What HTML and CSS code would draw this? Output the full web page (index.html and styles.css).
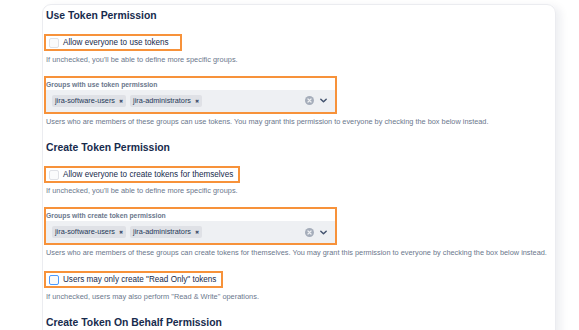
FILE: index.html
```html
<!DOCTYPE html>
<html lang="en">
<head>
    <meta charset="UTF-8">
    <meta name="viewport" content="width=device-width, initial-scale=1.0">
    <title>Token Permissions</title>
    <link rel="stylesheet" href="styles.css">
</head>
<body>
    <main class="card">
        <h2 class="title first">Use Token Permission</h2>
        <div class="mark check-mark wide">
            <label class="check"><span class="box"></span>Allow everyone to use tokens</label>
        </div>
        <p class="hint">If unchecked, you'll be able to define more specific groups.</p>

        <div class="mark field-mark">
            <div class="label">Groups with use token permission</div>
            <div class="select">
                <span class="tag">jira-software-users <i>&#x2716;</i></span>
                <span class="tag">jira-administrators <i>&#x2716;</i></span>
                <span class="icons">
                    <svg width="9" height="9" viewBox="0 0 10 10"><circle cx="5" cy="5" r="5" fill="#a5adba"/><path d="M3.3 3.3l3.4 3.4M6.7 3.3L3.3 6.7" stroke="#eef0f3" stroke-width="1.4" stroke-linecap="round"/></svg>
                    <svg width="9" height="9" viewBox="0 0 10 10"><path d="M2 3.5l3 3 3-3" fill="none" stroke="#42526e" stroke-width="1.6" stroke-linecap="round" stroke-linejoin="round"/></svg>
                </span>
            </div>
        </div>
        <p class="desc">Users who are members of these groups can use tokens. You may grant this permission to everyone by checking the box below instead.</p>

        <h2 class="title">Create Token Permission</h2>
        <div class="mark check-mark">
            <label class="check"><span class="box"></span>Allow everyone to create tokens for themselves</label>
        </div>
        <p class="hint">If unchecked, you'll be able to define more specific groups.</p>

        <div class="mark field-mark">
            <div class="label">Groups with create token permission</div>
            <div class="select">
                <span class="tag">jira-software-users <i>&#x2716;</i></span>
                <span class="tag">jira-administrators <i>&#x2716;</i></span>
                <span class="icons">
                    <svg width="9" height="9" viewBox="0 0 10 10"><circle cx="5" cy="5" r="5" fill="#a5adba"/><path d="M3.3 3.3l3.4 3.4M6.7 3.3L3.3 6.7" stroke="#eef0f3" stroke-width="1.4" stroke-linecap="round"/></svg>
                    <svg width="9" height="9" viewBox="0 0 10 10"><path d="M2 3.5l3 3 3-3" fill="none" stroke="#42526e" stroke-width="1.6" stroke-linecap="round" stroke-linejoin="round"/></svg>
                </span>
            </div>
        </div>
        <p class="desc">Users who are members of these groups can create tokens for themselves. You may grant this permission to everyone by checking the box below instead.</p>

        <div class="mark check-mark after-desc">
            <label class="check"><span class="box box-focus"></span>Users may only create "Read Only" tokens</label>
        </div>
        <p class="hint">If unchecked, users may also perform "Read &amp; Write" operations.</p>

        <h2 class="title">Create Token On Behalf Permission</h2>
    </main>
</body>
</html>
```

FILE: styles.css
```css
body,html{
    margin: 0;
    padding: 0;
    background: #fff;
    height: 100%;
    overflow: hidden;
}

body{
    font-family: "Liberation Sans", Arial, sans-serif;
    color: #172b4d;
}

.card{
    margin: 4px 0 0 42px;
    width: 511px;
    min-height: 400px;
    padding: 0 0 0 1px;
    border: 1px solid #ebecf0;
    border-radius: 9px;
    box-shadow: 5px 2px 8px rgba(9, 30, 66, 0.07);
    display: flex;
    flex-direction: column;
    align-items: flex-start;
}

.title{
    font-size: 10.4px;
    font-weight: bold;
    margin: 13px 0 0 2px;
    line-height: 16px;
}

.title.first{
    margin-top: 3px;
}

.mark{
    border: 2px solid #f7923a;
}

.check-mark{
    margin-top: 10px;
    padding: 1px 5px 0 3px;
}

.check-mark.wide{
    padding-right: 11px;
}

.check-mark.after-desc{
    margin-top: 13px;
}

.check{
    display: flex;
    align-items: center;
    gap: 4px;
    font-size: 8.15px;
    line-height: 12px;
}

.box{
    width: 8px;
    height: 8px;
    border: 1px solid #dfe1e6;
    border-radius: 2px;
    background: #fafbfc;
}

.box-focus{
    border-color: #4c9aff;
    border-width: 1.3px;
}

.hint{
    margin: 3.5px 0 0 2px;
    font-size: 7.4px;
    line-height: 10px;
    color: #6b778c;
}

.desc{
    margin: 3px 0 0 2px;
    font-size: 7.35px;
    line-height: 10px;
    color: #6b778c;
}

.field-mark{
    margin-top: 11px;
    width: 289px;
}

.label{
    font-size: 6.8px;
    font-weight: bold;
    color: #6b778c;
    line-height: 9px;
    padding: 2px 0 1px 0;
}

.select{
    background: #eef0f3;
    height: 22px;
    display: flex;
    align-items: center;
    gap: 4px;
    padding: 0 4px 0 6px;
}

.tag{
    background: #dfe1e6;
    border-radius: 2px;
    font-size: 7.3px;
    line-height: 12px;
    padding: 0 3px;
    color: #253858;
    display: flex;
    align-items: center;
    gap: 4px;
}

.tag i{
    font-style: normal;
    font-size: 5px;
    color: #42526e;
}

.icons{
    margin-left: auto;
    display: flex;
    gap: 5px;
    align-items: center;
    padding-right: 3px;
}
```
